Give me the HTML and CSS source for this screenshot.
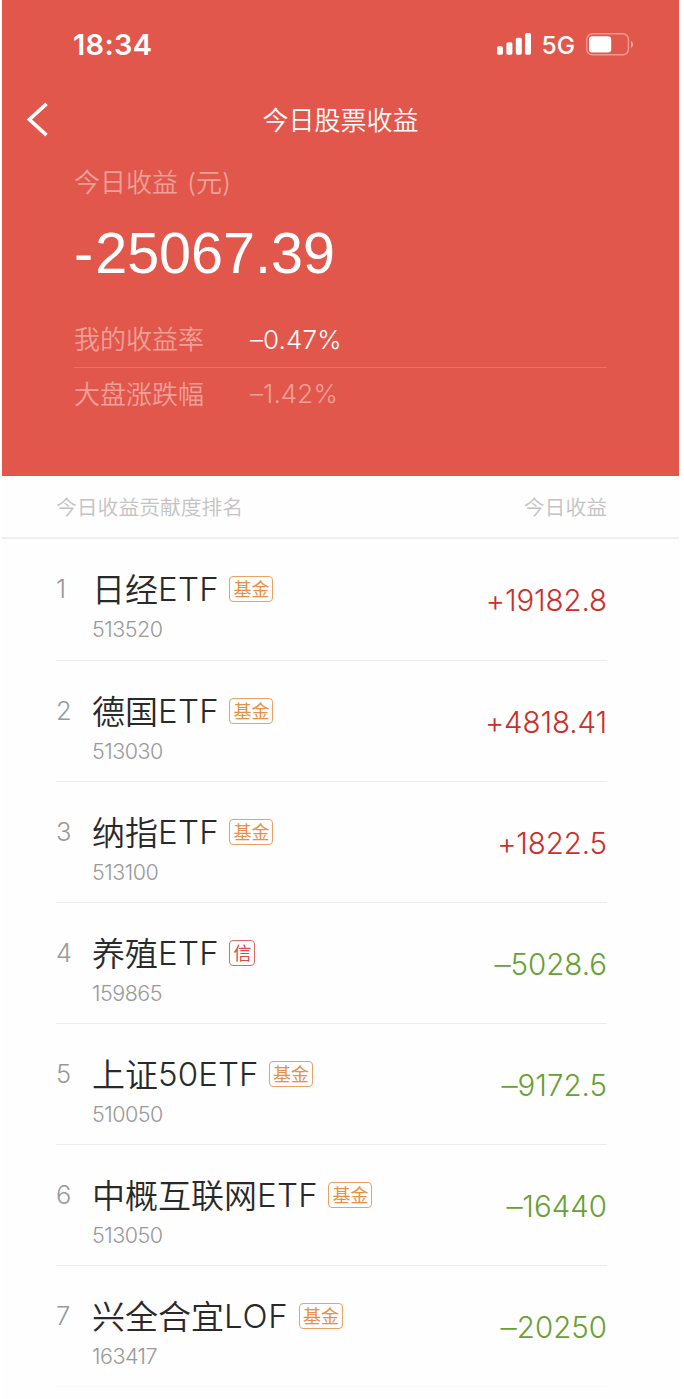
FILE: index.html
```html
<!DOCTYPE html>
<html lang="zh-CN">
<head>
<meta charset="utf-8">
<title>今日股票收益</title>
<link rel="stylesheet" href="styles.css">
</head>
<body>
<div class="app">
  <header class="hero">
    <div class="status">
      <span class="time">18:34</span>
      <svg class="signal" width="34" height="22" viewBox="0 0 34 22" fill="#fff"><rect x="0" y="13.3" width="6" height="8.4" rx="1.6"/><rect x="9.4" y="9.2" width="6" height="12.5" rx="1.6"/><rect x="18.8" y="4.8" width="6" height="16.9" rx="1.6"/><rect x="28" y="0" width="6" height="21.7" rx="1.6"/></svg>
      <span class="net">5G</span>
      <svg class="battery" width="48" height="23" viewBox="0 0 48 23"><rect x=".8" y=".8" width="41.6" height="21" rx="5.5" fill="none" stroke="#fff" stroke-opacity=".4" stroke-width="1.4"/><rect x="3" y="3.2" width="22.2" height="16.2" rx="3.2" fill="#fff"/><path d="M45 8c2.7 1.3 2.7 5.5 0 6.8z" fill="#fff" fill-opacity=".5"/></svg>
    </div>
    <nav class="nav">
      <svg class="back" width="22" height="36" viewBox="0 0 22 36" fill="none" stroke="#fff" stroke-width="3.6"><path d="M20.5 1.8 3.4 17.5 20.5 33.2"/></svg>
      <h1 class="title">今日股票收益</h1>
    </nav>
    <section class="summary">
      <div class="caption">今日收益<span class="unit"><span class="paren">(</span>元<span class="paren">)</span></span></div>
      <div class="total"><span class="sign">-</span>25067.39</div>
      <div class="rate mine"><span class="rate-label">我的收益率</span><span class="rate-value">–0.47%</span></div>
      <div class="rate market"><span class="rate-label">大盘涨跌幅</span><span class="rate-value">–1.42%</span></div>
    </section>
  </header>
  <div class="columns"><span>今日收益贡献度排名</span><span>今日收益</span></div>
  <ol class="list">
    <li class="row"><span class="rank">1</span><div class="fund"><div class="name"><span class="label"><span class="han">日经</span>ETF</span><span class="tag">基金</span></div><div class="code">513520</div></div><span class="amount up">+19182.8</span></li>
    <li class="row"><span class="rank">2</span><div class="fund"><div class="name"><span class="label"><span class="han">德国</span>ETF</span><span class="tag">基金</span></div><div class="code">513030</div></div><span class="amount up">+4818.41</span></li>
    <li class="row"><span class="rank">3</span><div class="fund"><div class="name"><span class="label"><span class="han">纳指</span>ETF</span><span class="tag">基金</span></div><div class="code">513100</div></div><span class="amount up">+1822.5</span></li>
    <li class="row"><span class="rank">4</span><div class="fund"><div class="name"><span class="label"><span class="han">养殖</span>ETF</span><span class="tag credit">信</span></div><div class="code">159865</div></div><span class="amount down"><span class="minus">–</span>5028.6</span></li>
    <li class="row"><span class="rank">5</span><div class="fund"><div class="name"><span class="label tight"><span class="han">上证</span>50ETF</span><span class="tag">基金</span></div><div class="code">510050</div></div><span class="amount down"><span class="minus">–</span>9172.5</span></li>
    <li class="row"><span class="rank">6</span><div class="fund"><div class="name"><span class="label"><span class="han">中概互联网</span>ETF</span><span class="tag">基金</span></div><div class="code">513050</div></div><span class="amount down"><span class="minus">–</span>16440</span></li>
    <li class="row"><span class="rank">7</span><div class="fund"><div class="name"><span class="label wide"><span class="han">兴全合宜</span>LOF</span><span class="tag">基金</span></div><div class="code">163417</div></div><span class="amount down"><span class="minus">–</span>20250</span></li>
  </ol>
</div>
</body>
</html>
```

FILE: styles.css
```css
* { box-sizing: border-box; }
body {
  margin: 0;
  background: #fff;
  font-family: Inter, "Noto Sans CJK SC", sans-serif;
  font-weight: 300;
}
.app { width: 677px; height: 1399px; margin-left: 2px; overflow: hidden; background: #fefefe; }
.hero { height: 476px; background: #e2574b; color: #fff; }
.status { display: flex; align-items: center; height: 88px; padding: 0 45px 0 71px; }
.time { flex: 1; padding-top: 1px; font-size: 29px; font-weight: 600; line-height: 40px; letter-spacing: .3px; }
.net { margin: 1px 11px 0 11px; font-size: 24.5px; font-weight: 450; line-height: 30px; }
.nav { display: grid; grid-template-columns: 100px 1fr 100px; align-items: center; height: 63px; }
.back { margin-left: 24px; }
.title { margin: 0; padding-top: 2px; text-align: center; font-size: 26px; font-weight: 350; line-height: 40px; }
.summary { padding: 12px 72px 0; }
.caption { font-size: 26px; font-weight: 350; line-height: 40px; color: #eea098; }
.unit { margin-left: 9px; }
.total { margin-top: 20px; font: 400 57.5px/60px "Liberation Sans", Arial, sans-serif; white-space: nowrap; }
.sign { margin-right: 2px; }
.rate { display: flex; height: 54px; font-size: 26px; line-height: 52px; }
.rate-label { width: 176px; padding-top: 1px; font-weight: 350; color: #eea098; }
.mine { height: 57px; margin-top: 28px; border-bottom: 1px solid #ea7068; line-height: 56px; }
.rate-value { letter-spacing: .1px; }
.mine .rate-value { padding-top: 1px; }
.market { color: #eea098; }
.columns {
  display: flex; justify-content: space-between;
  height: 63px; padding: 1px 72px 0 54px;
  border-bottom: 2px solid #efefef;
  font-size: 20.8px; font-weight: 350; line-height: 62px; color: #c3c3c3;
}
.list { margin: 0 72px 0 54px; padding: 0; list-style: none; }
.row { display: flex; height: 121px; border-bottom: 1px solid #ececec; color: #999; }
.row:first-child { height: 122px; }
.row:last-child { border-color: #f8f8f8; }
.rank { width: 36px; padding-top: 34px; font-size: 25.5px; line-height: 32px; }
.fund { flex: 1; padding-top: 30px; }
.name { display: flex; align-items: center; height: 40px; font-size: 33px; line-height: 40px; color: #292929; }
.label { height: 40px; letter-spacing: .3px; }
.tight { letter-spacing: .1px; }
.wide { letter-spacing: .8px; }
.han { font-weight: 350; letter-spacing: 0; vertical-align: -1px; line-height: 1; }
.tag {
  height: 26px; margin-left: 10.5px; padding: 0 3px;
  border: 1px solid #e7a264; border-radius: 4px;
  font-size: 18px; font-weight: 400; line-height: 26px; color: #e59145;
}
.credit { border-color: #d96b67; color: #d74b48; }
.code { margin-top: 6px; font-size: 21.5px; line-height: 29px; letter-spacing: -.5px; }
.amount { padding-top: 41px; font-size: 29.5px; line-height: 40px; }
.minus { display: inline-block; transform: scaleX(1.1); transform-origin: right; }
.up { color: #c9302b; letter-spacing: -.1px; }
.down { color: #67a034; }
```
